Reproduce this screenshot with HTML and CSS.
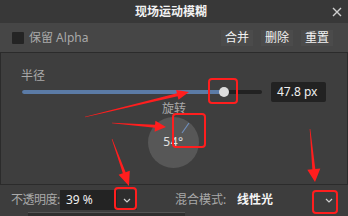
FILE: index.html
```html
<!DOCTYPE html>
<html lang="zh">
<head>
<meta charset="utf-8">
<link rel="stylesheet" href="styles.css">
</head>
<body>
<div class="dialog">
  <div class="titlebar">
    <span class="title">现场运动模糊</span>
    <svg class="close" width="10" height="10" viewBox="0 0 10 10"><path d="M1 1L9 9M9 1L1 9" stroke="#cfcfcf" stroke-width="1.4" fill="none"/></svg>
  </div>
  <div class="toolbar">
    <span class="checkbox"></span>
    <span class="keep-text">保留 Alpha</span>
    <div class="actions">
      <button class="btn">合并</button>
      <button class="btn">删除</button>
      <button class="btn">重置</button>
    </div>
  </div>
  <div class="main">
    <div class="radius-label">半径</div>
    <div class="slider-row">
      <div class="track">
        <div class="fill" style="width:202px"></div>
        <div class="thumb"></div>
      </div>
      <div class="value">47.8 px</div>
    </div>
    <div class="dial-label">旋转</div>
    <div class="dial">
      <svg class="needle" width="51" height="51" viewBox="0 0 51 51"><path d="M34 16L41 6" stroke="#6f8fbd" stroke-width="1.2" fill="none"/></svg>
      <span class="dial-value">54°</span>
    </div>
  </div>
  <div class="bottombar">
    <span class="op-label">不透明度:</span>
    <span class="op-input">39 %</span>
    <span class="drop"><svg width="8" height="5" viewBox="0 0 8 5"><path d="M1 1L4 4L7 1" stroke="#cfcfcf" stroke-width="1.2" fill="none"/></svg></span>
    <span class="blend-label">混合模式:</span>
    <span class="blend-value">线性光</span>
    <span class="drop blend-drop"><svg width="8" height="5" viewBox="0 0 8 5"><path d="M1 1L4 4L7 1" stroke="#cfcfcf" stroke-width="1.2" fill="none"/></svg></span>
  </div>
  <div class="popup-peek"></div>
  <svg class="annot" width="348" height="216" viewBox="0 0 348 216">
    <g fill="none" stroke="#ff1e1e" stroke-width="2">
      <rect x="209" y="79" width="28" height="24" rx="3"/>
      <rect x="173" y="114" width="32" height="33" rx="3"/>
      <rect x="115" y="188" width="21" height="21" rx="3"/>
      <rect x="313" y="191" width="24" height="22" rx="3"/>
    </g>
    <g fill="#ff1e1e">
      <polygon points="85,117.3 177.6,96.3 178.5,99.7 189,92 176.1,89.9 177,93.3 85,116.7"/>
      <polygon points="112,122.7 155.1,124.7 155.4,120.7 166,127 154.6,131.7 154.9,127.7 112,123.3"/>
      <polygon points="111.7,139.1 122.8,173.3 118.6,174.8 129,186 129.8,170.8 125.6,172.3 112.3,138.9"/>
      <polygon points="309.7,129 312.3,169.2 307.3,169.7 315,182 320.3,168.4 315.3,168.9 310.3,129"/>
    </g>
  </svg>
</div>
</body>
</html>
```
FILE: styles.css
```css
html, body {
  margin: 0;
  padding: 0;
}
body {
  width: 348px;
  height: 216px;
  overflow: hidden;
  background: #3d3d3d;
  font-family: "Noto Sans", "Noto Sans CJK SC", sans-serif;
}
.dialog {
  position: relative;
  width: 348px;
  height: 216px;
  display: flex;
  flex-direction: column;
}
.titlebar {
  height: 23px;
  flex: none;
  background: #383838;
  display: flex;
  align-items: center;
  justify-content: center;
  position: relative;
}
.title {
  color: #f2f2f2;
  font-size: 12px;
  font-weight: bold;
  line-height: 14px;
  margin-left: -6px;
}
.close {
  position: absolute;
  right: 6px;
  top: 7px;
}
.toolbar {
  height: 29px;
  flex: none;
  background: #464646;
  border-bottom: 1px solid #2b2b2b;
  display: flex;
  align-items: center;
  padding: 0 15px 0 12px;
}
.checkbox {
  width: 12px;
  height: 12px;
  background: #242424;
  border-radius: 1px;
  margin-right: 5px;
}
.keep-text {
  color: #a9a9a9;
  font-size: 12px;
  line-height: 14px;
}
.actions {
  margin-left: auto;
  display: flex;
  gap: 8px;
}
.btn {
  width: 32px;
  height: 16px;
  padding: 0;
  border: 0;
  background: #4b4b4b;
  color: #f2f2f2;
  font-family: inherit;
  font-size: 12px;
  line-height: 16px;
}
.main {
  flex: 1;
  min-height: 0;
  border-left: 1px solid #2b2b2b;
  border-right: 1px solid #2b2b2b;
  display: flex;
  flex-direction: column;
  background: #3e3e3e;
}
.radius-label {
  font-size: 12px;
  line-height: 13px;
  color: #a9a9a9;
  margin: 16px 0 0 20px;
}
.slider-row {
  display: flex;
  align-items: center;
  height: 20px;
  margin-left: 21px;
}
.track {
  position: relative;
  width: 240px;
  height: 4px;
  border-radius: 2px;
  background: #222222;
}
.fill {
  height: 100%;
  background: #5b7ba6;
  border-radius: 2px;
}
.thumb {
  position: absolute;
  left: 197px;
  top: -3px;
  width: 10px;
  height: 10px;
  border-radius: 50%;
  background: #dcdcdc;
}
.value {
  margin-left: 9px;
  width: 55px;
  height: 20px;
  box-sizing: border-box;
  padding-left: 6px;
  background: #222222;
  border-radius: 2px;
  color: #f0f0f0;
  font-size: 12px;
  line-height: 20px;
}
.dial-label {
  align-self: center;
  margin-top: 1px;
  font-size: 12px;
  line-height: 12px;
  color: #a9a9a9;
}
.dial {
  align-self: center;
  margin-top: 2px;
  margin-left: -1px;
  width: 51px;
  height: 51px;
  flex: none;
  border-radius: 50%;
  background: #575757;
  position: relative;
  display: flex;
  align-items: center;
  justify-content: center;
}
.needle {
  position: absolute;
  left: 0;
  top: 0;
}
.dial-value {
  color: #e2e2e2;
  font-size: 12px;
  line-height: 14px;
  letter-spacing: 0.5px;
  margin-top: -2px;
}
.bottombar {
  height: 32px;
  flex: none;
  box-sizing: border-box;
  border-top: 1px solid #2b2b2b;
  background: #3d3d3d;
  display: flex;
  align-items: flex-start;
  padding: 5px 9px 0 11px;
}
.op-label, .blend-label {
  flex: none;
  white-space: nowrap;
  color: #a9a9a9;
  font-size: 12px;
  line-height: 20px;
}
.op-label {
  width: 49px;
  letter-spacing: -0.5px;
}
.op-input {
  flex: none;
  width: 57px;
  height: 20px;
  box-sizing: border-box;
  padding-left: 6px;
  background: #232323;
  color: #f0f0f0;
  font-size: 12px;
  line-height: 20px;
  white-space: nowrap;
}
.drop {
  flex: none;
  width: 20px;
  height: 20px;
  background: #2d2d2d;
  display: flex;
  align-items: center;
  justify-content: center;
}
.blend-label {
  margin-left: 38px;
  width: 62px;
}
.blend-value {
  flex: none;
  white-space: nowrap;
  color: #f4f4f4;
  font-size: 12px;
  line-height: 20px;
  font-weight: bold;
}
.blend-drop {
  margin-left: auto;
  background: transparent;
}
.popup-peek {
  position: absolute;
  left: 28px;
  top: 212px;
  width: 157px;
  height: 4px;
  box-sizing: border-box;
  border-top: 1px solid #555555;
  background: #2e2e2e;
}
.annot {
  position: absolute;
  left: 0;
  top: 0;
  pointer-events: none;
}
```
